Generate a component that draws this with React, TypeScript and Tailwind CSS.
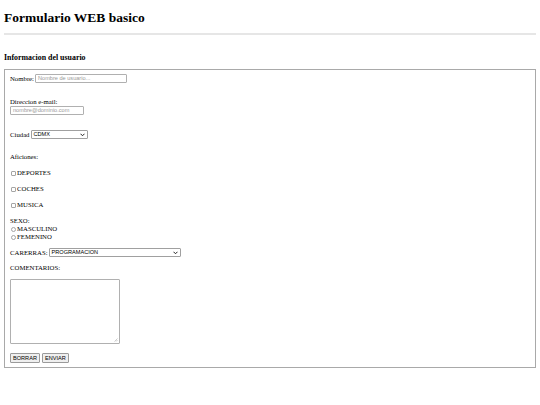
import React from "react";

function Check({ label }: { label: string }) {
  return (
    <div className="flex h-[8px] items-center">
      <span className="ml-[1px] mr-[1px] h-[5px] w-[5px] rounded-[1px] border border-[#a5a5a5] bg-white" />
      <span className="leading-[8px]">{label}</span>
    </div>
  );
}

function Radio({ label }: { label: string }) {
  return (
    <div className="flex h-[8px] items-center">
      <span className="ml-[1px] mr-[1px] h-[5px] w-[5px] rounded-full border border-[#a5a5a5] bg-white" />
      <span className="leading-[8px]">{label}</span>
    </div>
  );
}

function FakeSelect({ value, width }: { value: string; width: string }) {
  return (
    <div
      className={`flex h-[9px] items-center justify-between rounded-[1px] border border-[#a0a0a0] bg-white pl-[2px] pr-[2px] font-['Liberation_Sans'] text-[5.6px] leading-[7px] ${width}`}
    >
      <span>{value}</span>
      <svg width="5" height="4" viewBox="0 0 10 8">
        <path d="M1 1.5 L5 5.5 L9 1.5" stroke="#222" strokeWidth="2" fill="none" />
      </svg>
    </div>
  );
}

export default function App() {
  return (
    <div className="h-[405px] w-[540px] overflow-hidden bg-white px-[4px] font-['Liberation_Serif',serif] text-[6.75px] text-black">
      <h1 className="pt-[10px] text-[13.5px] font-bold leading-[16px]">Formulario WEB basico</h1>
      <div className="mt-[7px] h-[2px] w-full bg-[#e6e6e6]" />

      <h3 className="mt-[18px] text-[7.9px] font-bold leading-[9px]">Informacion del usuario</h3>

      <form className="mt-[7px] h-[299px] border border-[#a9a9a9] px-[5px]">
        <div className="mt-[4px] flex h-[9px] items-center gap-[1px]">
          <span className="leading-[8px]">Nombre:</span>
          <div className="h-[9px] w-[92px] rounded-[1px] border border-[#b0b0b0] pl-[2px] font-['Liberation_Sans'] text-[5.6px] leading-[7px] text-[#9a9a9a]">
            Nombre de usuario...
          </div>
        </div>

        <div className="mt-[15px] leading-[8px]">Direccion e-mail:</div>
        <div className="h-[9px] w-[74px] rounded-[1px] border border-[#b0b0b0] pl-[2px] font-['Liberation_Sans'] text-[5.6px] leading-[7px] text-[#9a9a9a]">
          nombre@dominio.com
        </div>

        <div className="mt-[15px] flex h-[9px] items-center gap-[1px]">
          <span className="leading-[8px]">Ciudad</span>
          <FakeSelect value="CDMX" width="w-[57px]" />
        </div>

        <div className="mt-[14px] leading-[8px]">Aficiones:</div>

        <div className="mt-[8px]">
          <Check label="DEPORTES" />
        </div>
        <div className="mt-[8px]">
          <Check label="COCHES" />
        </div>
        <div className="mt-[8px]">
          <Check label="MUSICA" />
        </div>

        <div className="mt-[8px] leading-[8px]">SEXO:</div>
        <Radio label="MASCULINO" />
        <Radio label="FEMENINO" />

        <div className="mt-[7px] flex h-[9px] items-center gap-[1px]">
          <span className="leading-[8px]">CARERRAS:</span>
          <FakeSelect value="PROGRAMACION" width="w-[132px]" />
        </div>

        <div className="mt-[7px] leading-[8px]">COMENTARIOS:</div>

        <div className="relative mt-[7px] h-[65px] w-[110px] rounded-[1px] border border-[#b0b0b0] bg-white">
          <svg className="absolute bottom-[1px] right-[1px]" width="4" height="4" viewBox="0 0 8 8">
            <path d="M7 1 L1 7 M7 4 L4 7" stroke="#9a9a9a" strokeWidth="1" />
          </svg>
        </div>

        <div className="mt-[9px] flex gap-[2px]">
          <button
            type="button"
            className="h-[10px] rounded-[1px] border border-[#9a9a9a] bg-[#efefef] px-[2px] font-['Liberation_Sans'] text-[5.6px] leading-[8px]"
          >
            BORRAR
          </button>
          <button
            type="button"
            className="h-[10px] rounded-[1px] border border-[#9a9a9a] bg-[#efefef] px-[2px] font-['Liberation_Sans'] text-[5.6px] leading-[8px]"
          >
            ENVIAR
          </button>
        </div>
      </form>
    </div>
  );
}
